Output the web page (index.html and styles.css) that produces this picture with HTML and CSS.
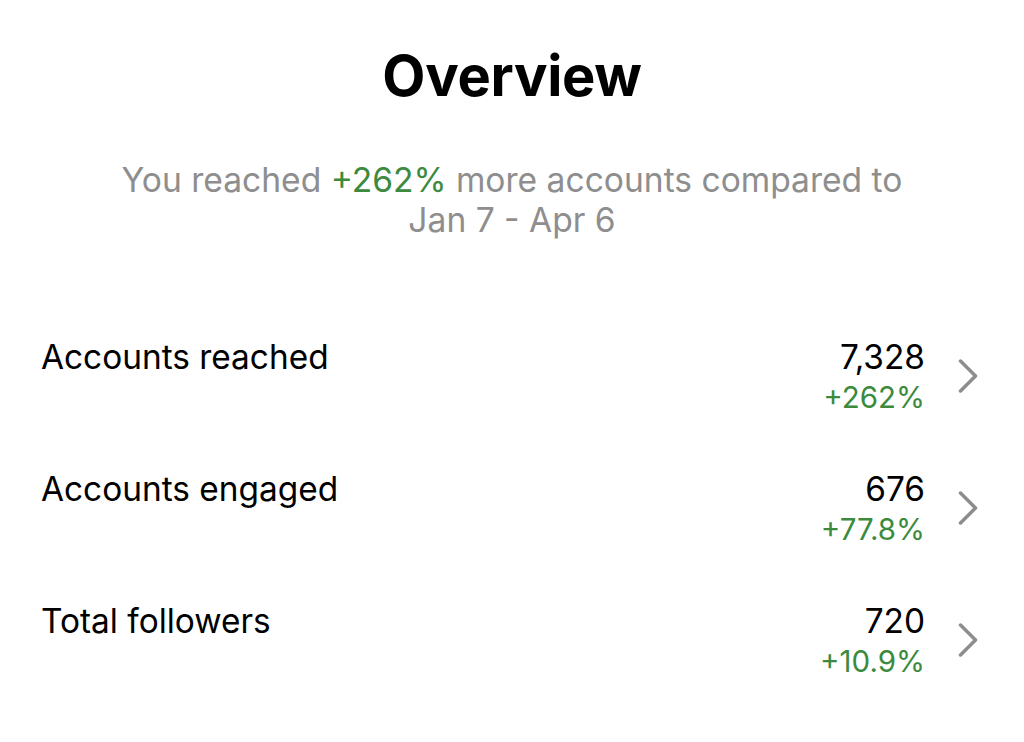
FILE: index.html
```html
<!DOCTYPE html>
<html>
<head>
<meta charset="utf-8">
<link rel="stylesheet" href="styles.css">
</head>
<body>
<div class="page">
  <h1 class="title">Overview</h1>
  <p class="summary">You reached <span class="up">+262%</span> more accounts compared to<br>Jan 7 - Apr 6</p>
  <div class="list">
    <div class="row">
      <div class="label">Accounts reached</div>
      <div class="values"><div class="num">7,328</div><div class="delta">+262%</div></div>
      <svg class="chev" viewBox="0 0 20 34" width="20" height="34"><path d="M2.5 2 L17.5 17 L2.5 32" fill="none" stroke="#8c8c8c" stroke-width="3.5" stroke-linecap="round" stroke-linejoin="round"/></svg>
    </div>
    <div class="row">
      <div class="label">Accounts engaged</div>
      <div class="values"><div class="num">676</div><div class="delta">+77.8%</div></div>
      <svg class="chev" viewBox="0 0 20 34" width="20" height="34"><path d="M2.5 2 L17.5 17 L2.5 32" fill="none" stroke="#8c8c8c" stroke-width="3.5" stroke-linecap="round" stroke-linejoin="round"/></svg>
    </div>
    <div class="row">
      <div class="label">Total followers</div>
      <div class="values"><div class="num">720</div><div class="delta">+10.9%</div></div>
      <svg class="chev" viewBox="0 0 20 34" width="20" height="34"><path d="M2.5 2 L17.5 17 L2.5 32" fill="none" stroke="#8c8c8c" stroke-width="3.5" stroke-linecap="round" stroke-linejoin="round"/></svg>
    </div>
  </div>
</div>
</body>
</html>
```
FILE: styles.css
```css
html, body { margin: 0; padding: 0; background: #fff; }
body { font-family: Inter, "Noto Sans", sans-serif; color: #000; }
.page { padding: 40px 0 0; }
.title { margin: 0; text-align: center; font-size: 56px; font-weight: 700; line-height: 72px; letter-spacing: -0.3px; }
.summary { margin: 48px 0 0; text-align: center; font-size: 33.6px; line-height: 40px; color: #8e8e8e; }
.up { color: #3b8a3e; }
.list { margin-top: 97px; padding: 0 41px; display: flex; flex-direction: column; gap: 52px; }
.row { display: flex; align-items: flex-start; height: 80px; }
.label { flex: 1; font-size: 33.4px; line-height: 40px; }
.values { text-align: right; }
.num { font-size: 33.4px; line-height: 40px; }
.delta { font-size: 29.5px; line-height: 40px; color: #3b8a3e; }
.chev { margin: 22px 5.5px 0 32.5px; }
```
